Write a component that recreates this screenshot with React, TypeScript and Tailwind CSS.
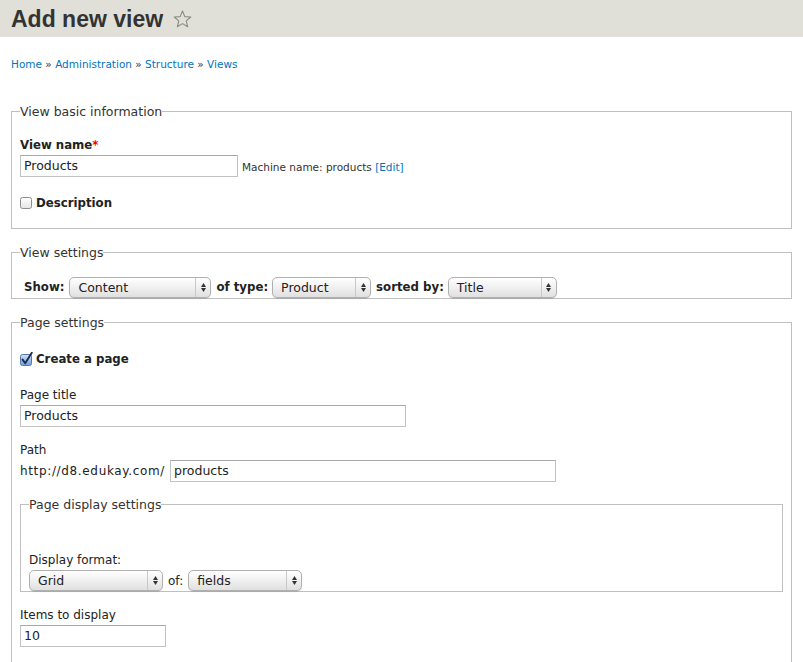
import React from 'react';

const body = { fontFamily: '"DejaVu Sans", Verdana, sans-serif' };

function Star() {
  return (
    <svg width="19" height="18" viewBox="0 0 19 18" className="ml-[10px] mt-[1px]">
      <polygon
        points="9.5,1 11.8,6.6 17.8,7 13.2,10.9 14.7,16.8 9.5,13.6 4.3,16.8 5.8,10.9 1.2,7 7.2,6.6"
        fill="none"
        stroke="#8a8a85"
        strokeWidth="1.1"
        strokeLinejoin="round"
      />
    </svg>
  );
}

function Checkbox({ checked = false }: { checked?: boolean }) {
  if (checked) {
    return (
      <svg width="13" height="15" viewBox="0 0 13 15" className="shrink-0">
        <defs>
          <linearGradient id="cbOn" x1="0" y1="0" x2="0" y2="1">
            <stop offset="0" stopColor="#cfe2fa" />
            <stop offset="1" stopColor="#6d9fe0" />
          </linearGradient>
        </defs>
        <rect x="0.5" y="2.5" width="11" height="11" rx="2" fill="url(#cbOn)" stroke="#5a77a8" />
        <path d="M2.6 7.6 L5.2 11.2 L11.8 0.8" fill="none" stroke="#1d2b48" strokeWidth="1.9" strokeLinecap="round" strokeLinejoin="round" />
      </svg>
    );
  }
  return (
    <svg width="12" height="12" viewBox="0 0 12 12" className="shrink-0">
      <defs>
        <linearGradient id="cbOff" x1="0" y1="0" x2="0" y2="1">
          <stop offset="0" stopColor="#ffffff" />
          <stop offset="1" stopColor="#e4e4e4" />
        </linearGradient>
      </defs>
      <rect x="0.5" y="0.5" width="11" height="11" rx="2" fill="url(#cbOff)" stroke="#8c8c8c" />
    </svg>
  );
}

function Select({ value, width }: { value: string; width: string }) {
  return (
    <div
      className={`${width} h-[21px] flex items-stretch rounded-[5px] border border-[#b0b0b0] bg-gradient-to-b from-[#ffffff] via-[#f0f0f0] to-[#e0e0e0] shadow-[0_1px_1px_rgba(0,0,0,0.12)] text-[12.5px] font-normal text-[#222]`}
    >
      <span className="flex-1 pl-[8px] leading-[19px]">{value}</span>
      <span className="w-[15px] border-l border-[#c8c8c8] flex flex-col items-center justify-center gap-[1px]">
        <svg width="5" height="4" viewBox="0 0 5 4">
          <polygon points="2.5,0 5,4 0,4" fill="#333" />
        </svg>
        <svg width="5" height="4" viewBox="0 0 5 4">
          <polygon points="0,0 5,0 2.5,4" fill="#333" />
        </svg>
      </span>
    </div>
  );
}

function TextInput({ value, width }: { value: string; width: string }) {
  return (
    <div
      className={`${width} h-[22px] border border-[#c2c2c2] border-t-[#a8a8a8] bg-white pl-[3px] text-[12.5px] leading-[20px] text-[#222]`}
    >
      {value}
    </div>
  );
}

function Legend({ children }: { children: React.ReactNode }) {
  return <legend className="px-0 text-[12.5px] leading-[19px] text-[#333]">{children}</legend>;
}

export default function App() {
  return (
    <div className="w-[803px] h-[662px] overflow-hidden bg-white" style={body}>
      {/* Header */}
      <div className="h-[37px] bg-[#e0e0d8] flex items-center pl-[11px]">
        <h1
          className="text-[23px] font-bold leading-[28px] text-[#333]"
          style={{ fontFamily: '"Liberation Sans", Arial, sans-serif' }}
        >
          Add new view
        </h1>
        <Star />
      </div>

      <div className="px-[11px]">
        {/* Breadcrumb */}
        <div className="mt-[20px] text-[10.5px] leading-[14px] text-[#333]">
          <a className="text-[#0074bd]">Home</a> » <a className="text-[#0074bd]">Administration</a> »{' '}
          <a className="text-[#0074bd]">Structure</a> » <a className="text-[#0074bd]">Views</a>
        </div>

        {/* View basic information */}
        <fieldset className="mt-[31px] border border-[#c0c0c0] px-[8px] pt-[16px] pb-[17px]">
          <Legend>View basic information</Legend>
          <div className="text-[11.75px] font-bold leading-[16px] text-[#222]">
            View name<span className="text-[#e00]">*</span>
          </div>
          <div className="mt-[2px] flex items-center gap-[4px]">
            <TextInput value="Products" width="w-[218px]" />
            <span className="text-[10.5px] leading-[14px] text-[#333] pt-[2px]">
              Machine name: products <a className="text-[#0074bd]">[Edit]</a>
            </span>
          </div>
          <div className="mt-[18px] flex items-center gap-[4px]">
            <Checkbox />
            <span className="text-[11.75px] font-bold leading-[16px] text-[#222]">Description</span>
          </div>
        </fieldset>

        {/* View settings */}
        <fieldset className="mt-[14px] border border-[#c0c0c0] px-[8px] pt-[15px] pb-0">
          <Legend>View settings</Legend>
          <div className="flex items-center gap-[4px] pl-[4px] text-[11.75px] font-bold text-[#222]">
            <span className="mr-[1px]">Show:</span>
            <Select value="Content" width="w-[142px]" />
            <span className="ml-[1px]">of type:</span>
            <Select value="Product" width="w-[99px]" />
            <span className="ml-[1px]">sorted by:</span>
            <Select value="Title" width="w-[109px]" />
          </div>
        </fieldset>

        {/* Page settings */}
        <fieldset className="mt-[14px] border border-[#c0c0c0] px-[8px] pt-[19px] pb-[40px]">
          <Legend>Page settings</Legend>
          <div className="flex items-center gap-[3px] h-[16px]">
            <Checkbox checked />
            <span className="text-[11.75px] font-bold leading-[16px] text-[#222]">Create a page</span>
          </div>

          <div className="mt-[20px] text-[12px] leading-[16px] text-[#222]">Page title</div>
          <div className="mt-[2px]">
            <TextInput value="Products" width="w-[386px]" />
          </div>

          <div className="mt-[15px] text-[12px] leading-[16px] text-[#222]">Path</div>
          <div className="mt-[2px] flex items-center gap-[5px] text-[12px] text-[#222]">
            <span className="tracking-[0.65px]">http://d8.edukay.com/</span>
            <TextInput value="products" width="w-[386px]" />
          </div>

          {/* Page display settings */}
          <fieldset className="mt-[13px] border border-[#c0c0c0] px-[8px] pt-[38px] pb-0">
            <Legend>Page display settings</Legend>
            <div className="text-[12px] leading-[16px] text-[#222]">Display format:</div>
            <div className="mt-[2px] flex items-center gap-[5px] text-[12px] text-[#222]">
              <Select value="Grid" width="w-[134px]" />
              <span>of:</span>
              <Select value="fields" width="w-[114px]" />
            </div>
          </fieldset>

          <div className="mt-[15px] text-[12px] leading-[16px] text-[#222]">Items to display</div>
          <div className="mt-[2px]">
            <TextInput value="10" width="w-[146px]" />
          </div>
        </fieldset>
      </div>
    </div>
  );
}
